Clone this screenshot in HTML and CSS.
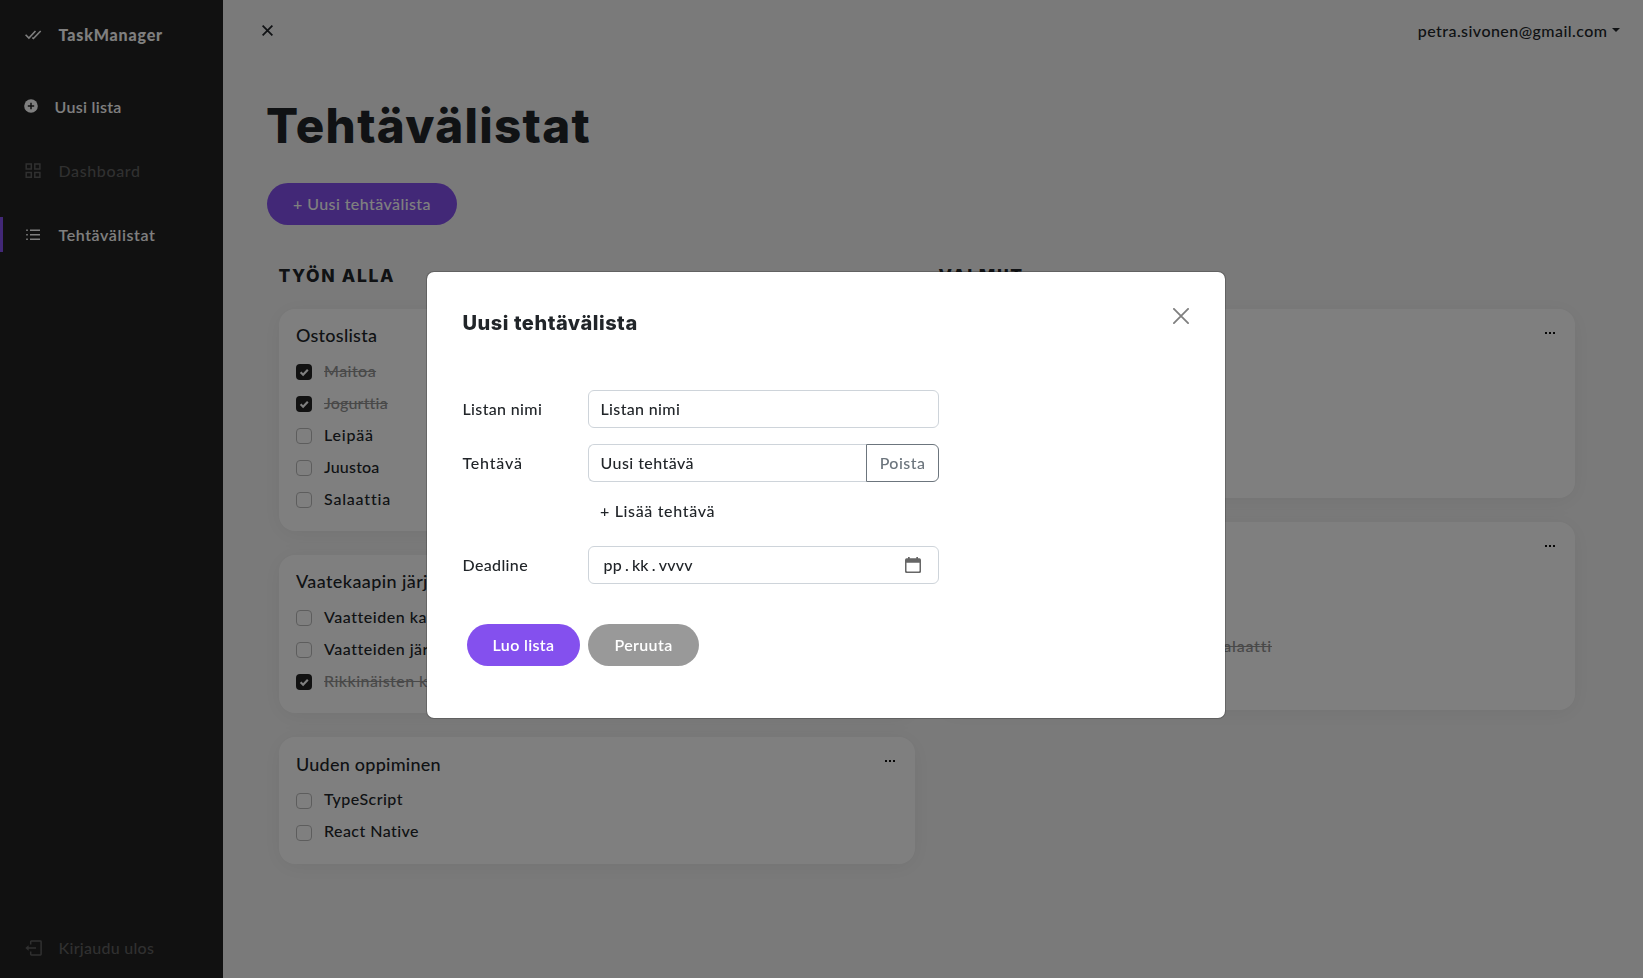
FILE: index.html
```html
<!DOCTYPE html>
<html lang="fi">
<head>
<meta charset="utf-8">
<title>TaskManager</title>
<link rel="stylesheet" href="styles.css">
</head>
<body>
<div class="app">
  <nav class="sidebar">
    <div class="nav-item brand">
      <svg class="icon" width="17" height="16" viewBox="0 0 17 16" fill="none" stroke="currentColor" stroke-width="1.6"><path d="M.6 7.7l3.3 3.3L10.5 4M7.3 10.7l1.1.8L15.7 4"/></svg>
      <span>TaskManager</span>
    </div>
    <div class="nav-item new-list">
      <svg class="icon" width="14" height="14" viewBox="0 0 14 14"><circle cx="7" cy="7" r="6.8" fill="currentColor"/><path d="M7 3.8v6.4M3.8 7h6.4" stroke="#222" stroke-width="1.5"/></svg>
      <span>Uusi lista</span>
    </div>
    <div class="nav-item muted dashboard">
      <svg class="icon" width="17" height="16" viewBox="0 0 17 16" fill="none" stroke="currentColor" stroke-width="1.5"><path d="M1.2 1.1h5.1v4.8H1.2zM9.8 1.1h5.1v4.8H9.8zM1.2 9.5h5.1v4.8H1.2zM9.8 9.5h5.1v4.8H9.8z"/></svg>
      <span>Dashboard</span>
    </div>
    <div class="nav-item active">
      <svg class="icon" width="17" height="16" viewBox="0 0 17 16" stroke="currentColor" stroke-width="1.4"><path d="M5 3.2h10M5 7.7h10M5 12.2h10M1.2 3.2h1.6M1.2 7.7h1.6M1.2 12.2h1.6"/></svg>
      <span>Tehtävälistat</span>
    </div>
    <div class="nav-item muted logout">
      <svg class="icon" width="17" height="16" viewBox="0 0 17 16" fill="none" stroke="currentColor" stroke-width="1.5" stroke-linejoin="round"><path d="M5.7 4.500V1.700q0-.7.7-.7h9q.7 0 .7.7v12.500q0 .7-.7.7h-9q-.7 0-.7-.7v-2.800M3 8h8"/><path d="M.3 8l3.300-2.800v5.600z" fill="currentColor" stroke="none"/></svg>
      <span>Kirjaudu ulos</span>
    </div>
  </nav>

  <main class="main">
    <header class="topbar">
      <svg class="collapse" width="11" height="11" viewBox="0 0 11 11" stroke="currentColor" stroke-width="1.8"><path d="M.6.6l9.8 9.800M10.400.6L.6 10.400"/></svg>
      <div class="account"><span>petra.sivonen@gmail.com</span><i class="caret"></i></div>
    </header>
    <h1>Tehtävälistat</h1>
    <button class="btn btn-new">+ Uusi tehtävälista</button>

    <div class="columns">
      <section class="column">
        <h2>TYÖN ALLA</h2>
        <article class="card">
          <header><h3>Ostoslista</h3><span class="dots"><i></i><i></i><i></i></span></header>
          <ul>
            <li class="done"><i class="box"><svg width="16" height="16" viewBox="0 0 16 16"><path d="M4.6 8.3l2.5 2.4 4.7-4.9"/></svg></i><span>Maitoa</span></li>
            <li class="done"><i class="box"><svg width="16" height="16" viewBox="0 0 16 16"><path d="M4.6 8.3l2.5 2.4 4.7-4.9"/></svg></i><span class="tight">Jogurttia</span></li>
            <li><i class="box"></i><span class="loose">Leipää</span></li>
            <li><i class="box"></i><span class="tight">Juustoa</span></li>
            <li><i class="box"></i><span class="loose">Salaattia</span></li>
          </ul>
        </article>
        <article class="card">
          <header><h3 class="wide">Vaatekaapin järjestys</h3><span class="dots"><i></i><i></i><i></i></span></header>
          <ul>
            <li><i class="box"></i><span class="wide">Vaatteiden karsiminen</span></li>
            <li><i class="box"></i><span class="wide">Vaatteiden järjestely</span></li>
            <li class="done"><i class="box"><svg width="16" height="16" viewBox="0 0 16 16"><path d="M4.6 8.3l2.5 2.4 4.7-4.9"/></svg></i><span>Rikkinäisten korjaus</span></li>
          </ul>
        </article>
        <article class="card learning">
          <header><h3>Uuden oppiminen</h3><span class="dots"><i></i><i></i><i></i></span></header>
          <ul>
            <li><i class="box"></i><span>TypeScript</span></li>
            <li><i class="box"></i><span>React Native</span></li>
          </ul>
        </article>
      </section>
      <section class="column">
        <h2>VALMIIT</h2>
        <article class="card finished">
          <header><h3></h3><span class="dots"><i></i><i></i><i></i></span></header>
        </article>
        <article class="card finished meals">
          <header><h3></h3><span class="dots"><i></i><i></i><i></i></span></header>
          <ul>
            <li class="done meal"><span class="loose">Salaatti</span></li>
          </ul>
        </article>
      </section>
    </div>
  </main>
</div>

<div class="backdrop">
  <div class="modal">
    <div class="modal-head">
      <h4>Uusi tehtävälista</h4>
      <svg class="close" width="16" height="16" viewBox="0 0 16 16" stroke="#7f7f7f" stroke-width="1.8" stroke-linecap="round"><path d="M.9.9l14.2 14.2M15.1.9L.9 15.1"/></svg>
    </div>
    <div class="form">
      <label class="name">Listan nimi</label>
      <div class="input name">Listan nimi</div>
      <label class="loose">Tehtävä</label>
      <div class="group"><div class="input">Uusi tehtävä</div><button class="remove">Poista</button></div>
      <span></span>
      <div class="add">+ Lisää tehtävä</div>
      <label class="name">Deadline</label>
      <div class="input date">
        <span class="date-text">pp<b>.</b>kk<b>.</b>vvvv</span>
        <svg width="16" height="16" viewBox="0 0 16 16" fill="#666"><path fill-rule="evenodd" d="M3 0h1.7v1.3h6.6V0H13v1.3h1.4q1.6 0 1.6 1.6v11.5q0 1.6-1.6 1.6H1.6Q0 16 0 14.400V2.900Q0 1.300 1.600 1.300H3zM1.500 5.800v8q0 .7.7.7h11.600q.7 0 .7-.7v-8z"/></svg>
      </div>
    </div>
    <div class="actions">
      <button class="btn btn-create">Luo lista</button>
      <button class="btn btn-cancel">Peruuta</button>
    </div>
  </div>
</div>
</body>
</html>
```
FILE: styles.css
```css
* { box-sizing: border-box; }

body {
  margin: 0;
  font: 500 16px/24px Lato, "Open Sans", sans-serif;
  letter-spacing: .45px;
  color: #212529;
  overflow: hidden;
}

h1, h2, h3, h4, ul { margin: 0; padding: 0; }
svg { display: block; flex: none; }
button { font: inherit; letter-spacing: inherit; cursor: pointer; }
.loose { letter-spacing: .8px; }
.tight { letter-spacing: .18px; }
.wide { letter-spacing: .52px; }

.app { display: flex; height: 978px; background: #f5f5f5; }

/* Sidebar */
.sidebar {
  display: flex;
  flex-direction: column;
  gap: 29px;
  width: 223px;
  padding: 17px 0 13px;
  background: #222;
  color: #fff;
}
.nav-item {
  display: flex;
  align-items: center;
  height: 35px;
  padding-left: 25px;
}
.nav-item span { margin-left: 16.500px; letter-spacing: .62px; }
.brand { margin-bottom: 8px; font-weight: 900; }
.brand span { padding-top: 1px; letter-spacing: .82px; }
.new-list { padding-left: 24px; font-weight: 600; }
.new-list .icon { margin-top: -1px; }
.new-list span { letter-spacing: .3px; }
.muted { color: #606060; }
.active { padding-left: 22px; border-left: 3px solid #8450ee; font-weight: 600; }
.active span { letter-spacing: .58px; }
.logout { margin-top: auto; }
.logout span { letter-spacing: .28px; }

/* Main area */
.main { flex: 1; padding: 0 56px 0 44px; }
.topbar {
  display: flex;
  justify-content: space-between;
  height: 97px;
  margin: 0 -33px 0 -5.500px;
  padding-top: 19px;
}
.collapse { margin-top: 6px; }
.account { display: flex; height: 24px; }
.caret {
  margin: 9px 0 0 4.500px;
  height: 4px;
  border: 4px solid transparent;
  border-top-color: currentColor;
  border-bottom: 0;
}
h1 {
  font: 800 47.5px/57px Inter, sans-serif;
  letter-spacing: 1.33px;
  margin-left: -1px;
}
.btn {
  height: 42px;
  padding: 0;
  border: 0;
  border-radius: 21px;
  color: #fff;
  font-weight: 600;
  letter-spacing: .35px;
}
.btn-new {
  display: block;
  width: 190px;
  margin-top: 29px;
  background: #8450ee;
  font-weight: 500;
  letter-spacing: .42px;
}

.columns {
  display: grid;
  grid-template-columns: 636px 636px;
  gap: 24px;
  margin-top: 40px;
  padding-left: 12px;
}
.column { display: flex; flex-direction: column; gap: 24px; }
h2 {
  font: 800 17.5px/21px Inter, sans-serif;
  letter-spacing: 1.66px;
  margin: 0 0 -1px -.5px;
}
.card {
  padding: 13px 18px 20px 17px;
  border-radius: 16px;
  background: #fff;
  box-shadow: 0 3px 22px rgba(0, 0, 0, .06);
}
.card header { display: flex; justify-content: space-between; height: 26px; }
h3 { font: 500 18px/26px Lato, sans-serif; letter-spacing: .25px; }
h3.wide { letter-spacing: .4px; }
.dots { display: flex; gap: 2px; margin: 10px 2px 0 0; }
.dots i { width: 2px; height: 2px; background: #111; }
.card ul { display: flex; flex-direction: column; gap: 8px; margin-top: 11px; }
.card li { display: flex; height: 24px; list-style: none; }
.box {
  width: 16px;
  height: 16px;
  margin: 5px 12px 0 0;
  border: 1px solid #bbb;
  border-radius: 4px;
}
.done { color: #929292; }
.done span { text-decoration: line-through; }
.done .box { border: 0; background: #222; }
.box path { fill: none; stroke: #fff; stroke-width: 2.2; }
.learning { height: 127px; }
.learning h3 { line-height: 28px; }
.learning .box { margin-top: 6px; }
.finished { height: 189px; }
.meals { height: 188px; }
.meals ul { margin-top: 73px; }
.meal { width: 316px; justify-content: flex-end; }

/* New list dialog */
.backdrop {
  position: fixed;
  inset: 0;
  display: flex;
  justify-content: center;
  align-items: flex-start;
  padding: 271px 0 0 9px;
  background: rgba(0, 0, 0, .5);
}
.modal {
  width: 800px;
  height: 448px;
  padding: 36px 36px 36px 35.500px;
  border: 1px solid rgba(0, 0, 0, .2);
  border-radius: 8px;
  background: #fff;
  background-clip: padding-box;
}
.modal-head { display: flex; justify-content: space-between; height: 82px; }
h4 { font: 800 20px/30px Inter, sans-serif; letter-spacing: .53px; }
.form {
  display: grid;
  grid-template-columns: 125.500px 351px;
  grid-template-rows: 38px 38px 32px 38px;
  row-gap: 16px;
}
.form label { line-height: 38px; }
.form .name { letter-spacing: .35px; }
.input {
  flex: 1;
  height: 38px;
  padding: 0 11.500px;
  border: 1px solid #ced4da;
  border-radius: 6px;
  line-height: 36px;
}
.group { display: flex; }
.group .input { border-radius: 6px 0 0 6px; border-right: 0; }
.remove {
  width: 73px;
  height: 38px;
  padding: 0;
  border: 1px solid #6c757d;
  border-radius: 0 6px 6px 0;
  background: none;
  color: #6c757d;
}
.add { padding-left: 12px; line-height: 26px; letter-spacing: .66px; }
.date { display: flex; align-items: center; justify-content: space-between; padding: 0 17px 0 14.500px; }
.date-text { letter-spacing: .2px; }
.date-text b { margin: 0 3px; font-weight: 500; }
.actions { display: flex; gap: 8px; margin: 40px 0 0 4.500px; }
.btn-create { width: 113px; background: #8450ee; }
.btn-cancel { width: 111px; background: #999; }
```
